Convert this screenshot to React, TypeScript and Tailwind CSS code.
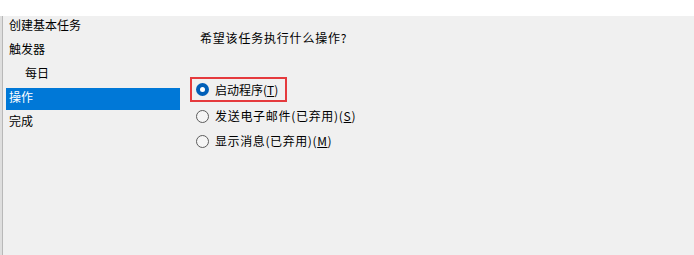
import React from "react";

const font = { fontFamily: '"Noto Sans CJK SC", "Noto Sans", sans-serif' };

function Radio({ checked }: { checked?: boolean }) {
  if (checked) {
    return (
      <span className="flex h-[13px] w-[13px] shrink-0 items-center justify-center rounded-full bg-[#005fb8]">
        <span className="h-[5px] w-[5px] rounded-full bg-white" />
      </span>
    );
  }
  return <span className="h-[13px] w-[13px] shrink-0 rounded-full border border-[#5c5c5c] bg-[#f5f5f5]" />;
}

export default function App() {
  const items: { label: string; indent?: boolean; active?: boolean }[] = [
    { label: "创建基本任务" },
    { label: "触发器" },
    { label: "每日", indent: true },
    { label: "操作", active: true },
    { label: "完成" },
  ];
  return (
    <div className="flex h-[255px] w-[694px] flex-col overflow-hidden bg-[#f0f0f0] text-[12px] text-black" style={font}>
      <div className="h-[16px] w-full shrink-0 bg-white" />
      <div className="flex flex-1">
        <div className="flex shrink-0">
          <div className="w-[2px] bg-[#dedede]" />
          <div className="w-[1px] bg-[#b8b8b8]" />
        </div>
        <div className="flex w-[177px] shrink-0 flex-col pl-[3px]">
          {items.map((it) => (
            <div key={it.label} className="h-[24px]">
              <div className={`h-[22px] pt-[2px] leading-[14px] ${it.active ? "bg-[#0078d7] text-white" : ""} ${it.indent ? "pl-[19px]" : "pl-[3px]"}`}>
                {it.label}
              </div>
            </div>
          ))}
        </div>
        <div className="flex flex-col pl-[10px]">
          <div className="mt-[15px] h-[14px] pl-[10px] leading-[14px] tracking-[0.8px]">希望该任务执行什么操作?</div>
          <div className="mt-[32px] flex h-[25px] w-[97px] items-center border-2 border-[#e53a3d] pl-[4px]">
            <Radio checked />
            <span className="ml-[6px] whitespace-nowrap leading-[14px]">
              启动程序(<span className="underline">T</span>)
            </span>
          </div>
          <div className="mt-[7px] flex h-[14px] items-center pl-[6px]">
            <Radio />
            <span className="ml-[6px] whitespace-nowrap leading-[14px] tracking-[0.7px]">
              发送电子邮件(已弃用)(<span className="underline">S</span>)
            </span>
          </div>
          <div className="mt-[11px] flex h-[14px] items-center pl-[6px]">
            <Radio />
            <span className="ml-[6px] whitespace-nowrap leading-[14px] tracking-[0.6px]">
              显示消息(已弃用)(<span className="underline">M</span>)
            </span>
          </div>
        </div>
      </div>
    </div>
  );
}
